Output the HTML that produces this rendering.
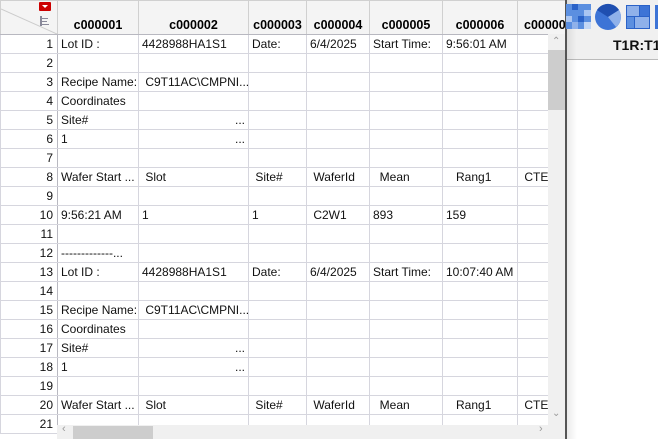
<html style="overflow:hidden"><head><style>
body{margin:0;width:658px;height:439px;overflow:hidden;background:#fff;font-family:"Liberation Sans",sans-serif;position:relative}
table{position:absolute;left:0;top:0;border-collapse:collapse;table-layout:fixed;width:578px;font-size:12px;color:#111}
td,th{box-sizing:border-box}
tr{height:19px}
td{height:19px;border:1px solid #d6d6de;padding:0 3px;white-space:nowrap;overflow:hidden;line-height:17px}
td.n{text-align:right;padding-right:4px;border-right:1px solid #b8b8c0}
tr.h{height:34px}
th{height:34px;background:#f4f4f4;border:1px solid #d0d0d0;font-weight:bold;font-size:12.5px;vertical-align:bottom;padding:0 0 2px 0;border-bottom:1px solid #b8b8c0;white-space:nowrap;overflow:hidden;color:#000}
</style></head><body>
<table>
<colgroup><col style="width:57px"><col style="width:81px"><col style="width:110px"><col style="width:58px"><col style="width:63px"><col style="width:73px"><col style="width:75px"><col style="width:61px"></colgroup>
<tr class="h"><th style="position:relative"><svg style="position:absolute;left:0;top:0" width="57" height="34"><line x1="0" y1="8" x2="56" y2="33" stroke="#ccc"/><rect x="38" y="1" width="12" height="9" fill="#c00" rx="1"/><path d="M41 4h6l-3 3z" fill="#fff"/><path d="M39 15h2v10h-2zM41 17h6v1h-6zM41 20h5v1h-5zM41 23h7v1h-7z" fill="#889"/></svg></th><th>c000001</th><th>c000002</th><th>c000003</th><th>c000004</th><th>c000005</th><th>c000006</th><th style="text-align:left;padding-left:6px">c000007</th></tr>
<tr><td class="n">1</td><td>Lot ID :</td><td>4428988HA1S1</td><td>Date:</td><td>6/4/2025</td><td>Start Time:</td><td>9:56:01 AM</td><td></td></tr>
<tr><td class="n">2</td><td></td><td></td><td></td><td></td><td></td><td></td><td></td></tr>
<tr><td class="n">3</td><td>Recipe Name:</td><td>&nbsp;C9T11AC\CMPNI...</td><td></td><td></td><td></td><td></td><td></td></tr>
<tr><td class="n">4</td><td>Coordinates</td><td></td><td></td><td></td><td></td><td></td><td></td></tr>
<tr><td class="n">5</td><td>Site#</td><td style="text-align:right">...</td><td></td><td></td><td></td><td></td><td></td></tr>
<tr><td class="n">6</td><td>1</td><td style="text-align:right">...</td><td></td><td></td><td></td><td></td><td></td></tr>
<tr><td class="n">7</td><td></td><td></td><td></td><td></td><td></td><td></td><td></td></tr>
<tr><td class="n">8</td><td>Wafer Start ...</td><td>&nbsp;Slot</td><td>&nbsp;Site#</td><td>&nbsp;WaferId</td><td>&nbsp;&nbsp;Mean</td><td>&nbsp;&nbsp;&nbsp;Rang1</td><td>&nbsp;CTE</td></tr>
<tr><td class="n">9</td><td></td><td></td><td></td><td></td><td></td><td></td><td></td></tr>
<tr><td class="n">10</td><td>9:56:21 AM</td><td>1</td><td>1</td><td>&nbsp;C2W1</td><td>893</td><td>159</td><td style="text-align:right">N/A</td></tr>
<tr><td class="n">11</td><td></td><td></td><td></td><td></td><td></td><td></td><td></td></tr>
<tr><td class="n">12</td><td>-------------...</td><td></td><td></td><td></td><td></td><td></td><td></td></tr>
<tr><td class="n">13</td><td>Lot ID :</td><td>4428988HA1S1</td><td>Date:</td><td>6/4/2025</td><td>Start Time:</td><td>10:07:40 AM</td><td></td></tr>
<tr><td class="n">14</td><td></td><td></td><td></td><td></td><td></td><td></td><td></td></tr>
<tr><td class="n">15</td><td>Recipe Name:</td><td>&nbsp;C9T11AC\CMPNI...</td><td></td><td></td><td></td><td></td><td></td></tr>
<tr><td class="n">16</td><td>Coordinates</td><td></td><td></td><td></td><td></td><td></td><td></td></tr>
<tr><td class="n">17</td><td>Site#</td><td style="text-align:right">...</td><td></td><td></td><td></td><td></td><td></td></tr>
<tr><td class="n">18</td><td>1</td><td style="text-align:right">...</td><td></td><td></td><td></td><td></td><td></td></tr>
<tr><td class="n">19</td><td></td><td></td><td></td><td></td><td></td><td></td><td></td></tr>
<tr><td class="n">20</td><td>Wafer Start ...</td><td>&nbsp;Slot</td><td>&nbsp;Site#</td><td>&nbsp;WaferId</td><td>&nbsp;&nbsp;Mean</td><td>&nbsp;&nbsp;&nbsp;Rang1</td><td>&nbsp;CTE</td></tr>
<tr><td class="n">21</td><td></td><td></td><td></td><td></td><td></td><td></td><td></td></tr>
</table>
<div style="position:absolute;left:548px;top:34px;width:17px;height:405px;background:#f0f0f0"></div>
<div style="position:absolute;left:548px;top:50px;width:17px;height:60px;background:#cdcdcd"></div>
<div style="position:absolute;left:552px;top:36px;font-size:10px;color:#999">&#8963;</div>
<div style="position:absolute;left:552px;top:408px;font-size:10px;color:#999">&#8964;</div>
<div style="position:absolute;left:57px;top:425px;width:491px;height:14px;background:#f0f0f0"></div>
<div style="position:absolute;left:73px;top:426px;width:80px;height:13px;background:#cdcdcd"></div>
<div style="position:absolute;left:62px;top:423px;font-size:11px;color:#999">&lsaquo;</div>
<div style="position:absolute;left:539px;top:423px;font-size:11px;color:#999">&rsaquo;</div>
<div style="position:absolute;left:565px;top:0;width:93px;height:439px;background:#fff;border-left:2px solid #555"></div>
<div style="position:absolute;left:567px;top:0;width:91px;height:59px;background:#f0f0f0;border-bottom:1px solid #bbb"></div>
<div style="position:absolute;left:567px;top:0;width:10px;height:439px;background:linear-gradient(90deg,rgba(0,0,0,.08),rgba(0,0,0,0))"></div>
<svg style="position:absolute;left:566px;top:3px" width="92" height="28">
<g><rect x="0" y="1" width="25" height="25" fill="#5b8fe0"/><rect x="6" y="1" width="6" height="6" fill="#2a62c8"/><rect x="18" y="7" width="7" height="6" fill="#aac6f2"/><rect x="0" y="13" width="6" height="6" fill="#aac6f2"/><rect x="12" y="13" width="6" height="6" fill="#2a62c8"/><rect x="6" y="19" width="6" height="7" fill="#8fb1ea"/><rect x="18" y="19" width="7" height="7" fill="#c2d6f5"/></g>
<g transform="translate(42,14)"><circle r="13" fill="#3d74d6"/><path d="M0 0L-11-7A13 13 0 0 1 11-7z" fill="#1f4fb0"/><path d="M0 0L11-7A13 13 0 0 1 8 10z" fill="#8fb1ea"/></g>
<g><rect x="60" y="2" width="24" height="24" fill="#2a62c8"/><rect x="61" y="3" width="12" height="10" fill="#8fb1ea"/><rect x="74" y="3" width="9" height="10" fill="#3d74d6"/><rect x="61" y="14" width="7" height="11" fill="#5b8fe0"/><rect x="69" y="14" width="14" height="11" fill="#8fb1ea"/></g>
<rect x="89" y="2" width="3" height="24" fill="#3d74d6"/>
</svg>
<div style="position:absolute;left:613px;top:37px;font-weight:bold;font-size:14px;color:#111;white-space:nowrap">T1R:T1</div>
</body></html>
